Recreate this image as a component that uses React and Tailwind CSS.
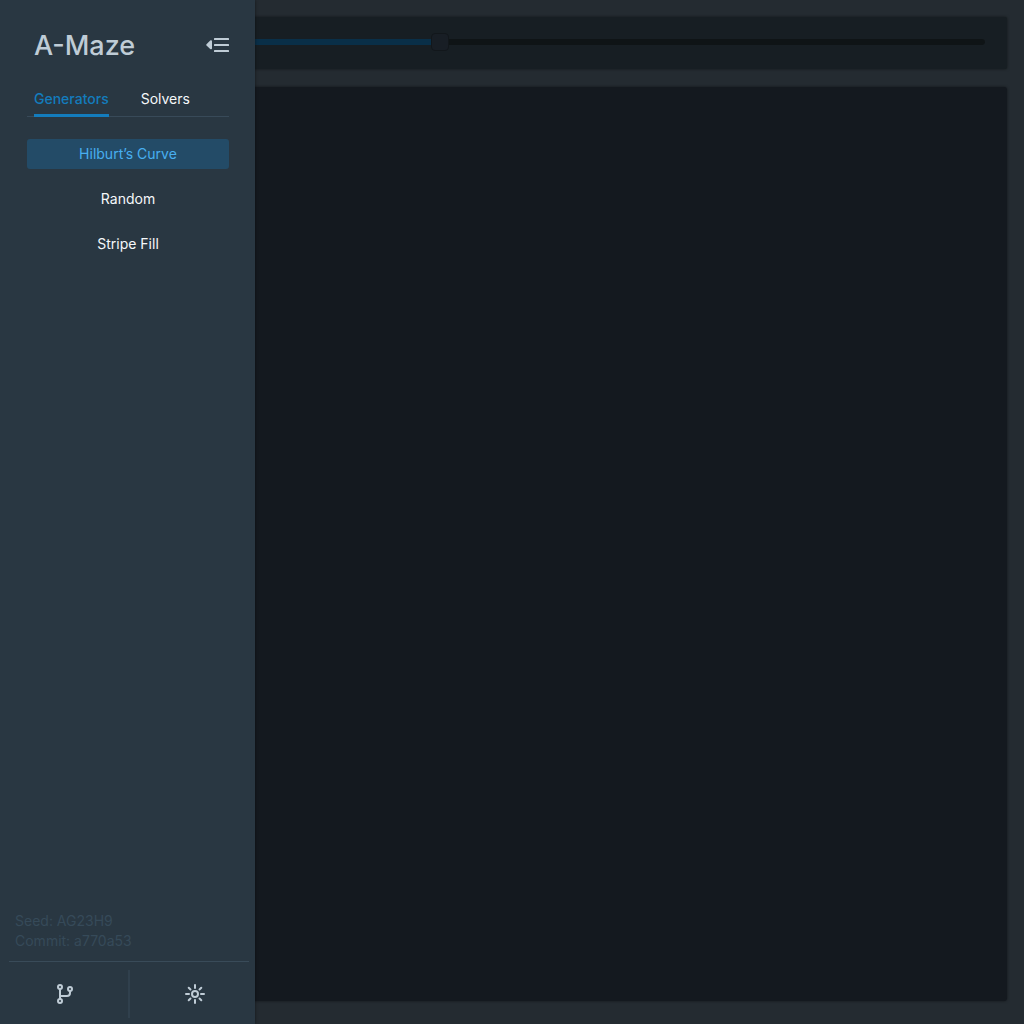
import { useState } from "react";

const generators = ["Hilburt’s Curve", "Random", "Stripe Fill"];

function CollapseIcon() {
  return (
    <svg width="24" height="16" viewBox="0 0 24 16" fill="currentColor" aria-hidden="true">
      <path d="M1.500 7.200 5.200 3.600C5.900 3 7 3.300 7 4.200v7.100c0 .9-1.100 1.300-1.800.700L1.500 8.500c-.5-.4-.5-.9 0-1.300Z" />
      <rect x="9" y="1" width="15" height="2" rx="0.500" />
      <rect x="9" y="7" width="15" height="2" rx="0.500" />
      <rect x="9" y="13" width="15" height="2" rx="0.500" />
    </svg>
  );
}

function BranchIcon() {
  return (
    <svg width="20" height="20" viewBox="0 0 20 20" fill="none" stroke="currentColor" strokeWidth="2" aria-hidden="true">
      <circle cx="5" cy="3" r="2" />
      <circle cx="5" cy="17" r="2" />
      <circle cx="15" cy="5" r="2" />
      <path d="M5 5v10M15 7v2a3 3 0 0 1-3 3H5" />
    </svg>
  );
}

function SunIcon() {
  return (
    <svg width="20" height="20" viewBox="0 0 20 20" fill="none" stroke="currentColor" strokeWidth="2" aria-hidden="true">
      <circle cx="10" cy="10" r="3" />
      <path
        strokeLinecap="round"
        d="M10 1v3M10 16v3M1 10h3M16 10h3M3.700 3.700l1.800 1.800M14.500 14.500l1.800 1.800M3.700 16.300l1.800-1.800M14.500 5.500l1.800-1.800"
      />
    </svg>
  );
}

export default function App() {
  const [selected, setSelected] = useState(generators[0]);
  const [progress, setProgress] = useState(36);
  const percent = (progress / 85) * 100;

  return (
    <div className="relative h-screen overflow-hidden bg-[#242b31] font-['Inter',sans-serif] text-sm text-[#f5f8fa]">
      <main className="flex h-full flex-col gap-[18px] pt-[17px] pr-[17px] pb-[23px] pl-4">
        <section className="flex h-[52px] shrink-0 items-center rounded-xs bg-[#171e23] px-[22px] shadow-[0_0_3px_rgba(0,0,0,0.5)]">
          <input
            type="range"
            aria-label="Progress"
            min="0"
            max="85"
            value={progress}
            onChange={(e) => setProgress(Number(e.target.value))}
            style={{ "--fill": `${percent}%` }}
            className="mb-[2px] h-[18px] w-full appearance-none bg-transparent [&::-webkit-slider-runnable-track]:h-[6px] [&::-webkit-slider-runnable-track]:rounded-full [&::-webkit-slider-runnable-track]:bg-[linear-gradient(to_right,#092f48_var(--fill),#0f1416_var(--fill))] [&::-webkit-slider-thumb]:-mt-[6px] [&::-webkit-slider-thumb]:size-[18px] [&::-webkit-slider-thumb]:appearance-none [&::-webkit-slider-thumb]:rounded [&::-webkit-slider-thumb]:border [&::-webkit-slider-thumb]:border-[#12171b] [&::-webkit-slider-thumb]:bg-[#181e25]"
          />
        </section>
        <section className="min-h-0 flex-1 rounded-[3px] bg-[#14191f] shadow-[0_0_3px_rgba(0,0,0,0.5)]" />
      </main>

      <aside className="absolute inset-y-0 left-0 flex w-[255px] flex-col bg-[#293742] shadow-[0_0_3px_rgba(0,0,0,0.5)]">
        <header className="flex items-start justify-between pt-7 pr-[26px] pl-[34px]">
          <h1 className="text-[27px] leading-9 font-medium text-[#bfccd6]">A-Maze</h1>
          <button type="button" aria-label="Collapse menu" className="mt-[9px] text-[#bfccd6]">
            <CollapseIcon />
          </button>
        </header>

        <div role="tablist" className="mr-[26px] ml-[27px] mt-[19px] flex h-[34px] gap-8 border-b border-[#384a59] pl-[7px]">
          <button type="button" role="tab" aria-selected="true" className="-mb-px h-[34px] border-b-3 border-[#137cbd] font-medium text-[#137cbd]">
            Generators
          </button>
          <button type="button" role="tab" aria-selected="false" className="-mb-px h-[34px] border-b-3 border-transparent">
            Solvers
          </button>
        </div>

        <nav aria-label="Generators" className="mr-[26px] ml-[27px] mt-[22px] flex flex-col gap-[15px]">
          {generators.map((name) => (
            <button
              key={name}
              type="button"
              aria-pressed={selected === name}
              onClick={() => setSelected(name)}
              className={
                selected === name
                  ? "h-[30px] rounded-[3px] bg-[#234b67] text-[#48aff0]"
                  : "h-[30px] rounded-[3px]"
              }
            >
              {name}
            </button>
          ))}
        </nav>

        <footer className="mt-auto">
          <div className="px-[15px] pb-[10px] leading-5 text-[#364a59]">
            <p>Seed: AG23H9</p>
            <p>Commit: a770a53</p>
          </div>
          <div className="mr-[6px] ml-[9px] grid h-[63px] grid-cols-[121px_1fr] border-t border-[#394b59] pt-[2px]">
            <button type="button" aria-label="Source code" className="mt-[6px] mb-[6px] flex items-center justify-center border-r-2 border-[#30404d] pr-2 text-[#bfccd6]">
              <BranchIcon />
            </button>
            <button type="button" aria-label="Toggle theme" className="flex items-center justify-center pl-[11px] text-[#bfccd6]">
              <SunIcon />
            </button>
          </div>
        </footer>
      </aside>
    </div>
  );
}
